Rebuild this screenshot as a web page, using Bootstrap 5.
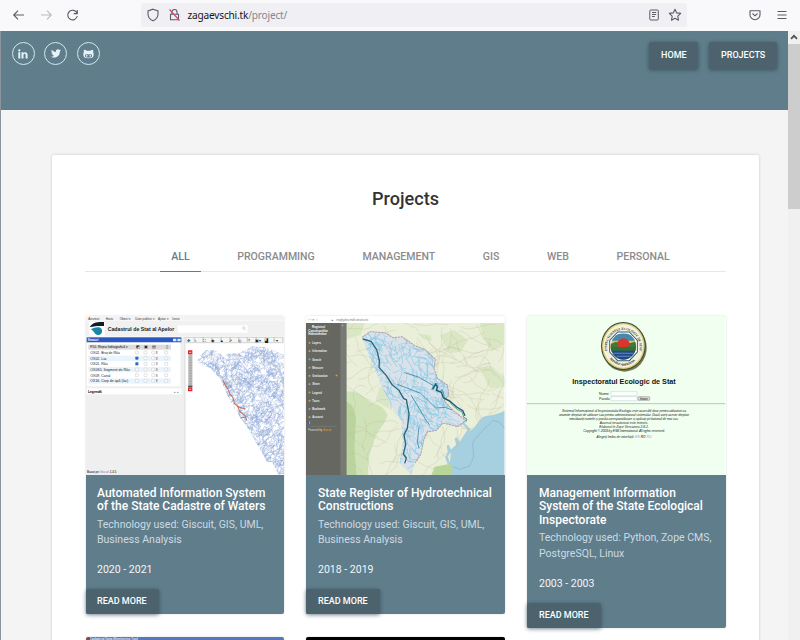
<!DOCTYPE html>
<html lang="en">
<head>
<meta charset="utf-8">
<meta name="viewport" content="width=device-width, initial-scale=1">
<title>Projects</title>
<link href="https://cdn.jsdelivr.net/npm/bootstrap@5.3.0/dist/css/bootstrap.min.css" rel="stylesheet">
<style>
html,body{height:640px;overflow:hidden}
body{font-family:Roboto,"Liberation Sans",sans-serif;background:#f4f4f4;color:#333;font-size:10.54px}
svg{display:block;flex:none}
.chrome{height:31px;background:#f9f9fb;padding:0 13px 1px 12px;color:#5b5b66}
.icon-fwd{margin-left:15px}
.icon-reload{margin-left:13px}
.urlbar{width:546px;height:24px;background:#f0f0f4;border-radius:3px;margin-left:62px;padding:0 5px;font:10.1px/24px "Noto Sans","Open Sans",sans-serif;letter-spacing:-.19px;color:#85858f}
.urlbar b{font-weight:400;color:#15141a}
.icon-lock{margin-left:7.5px}
.address{margin-left:7px}
.icon-star{margin-left:8px}
.icon-menu{margin-left:16px}
.viewport-row{height:609px;border-left:1px solid #8b9499}
.site{width:787px;overflow:hidden}
.site-head{height:79px;background:#607d8b;padding:11px 11px 0 10.5px}
.socials{gap:9.9px}
.social{width:23px;height:23px;border:1.5px solid #d3e9ef;border-radius:50%;color:#e3f3f7}
.main-nav{gap:11px}
.btn.act{background:#4c636e;color:#fff;border:0;border-radius:2px;font-weight:500;font-size:9px;line-height:27px;padding:0 11.7px;box-shadow:0 1px 4px rgba(20,50,70,.55);text-transform:uppercase}
.panel{width:707px;height:500px;margin:45px 0 0 51px;background:#fff;border-radius:2px;box-shadow:0 0 3px rgba(0,0,0,.18);padding:33px 33px 0 33px}
.panel h1{font-size:18.1px;font-weight:500;line-height:22px;margin:0 0 32px;color:#333}
.nav.filters{border-bottom:1px solid #e7e7e7;height:30px;gap:25.6px;padding-left:30px}
.filters .nav-link{padding:0 11px;height:30px;line-height:30px;font-size:10.55px;font-weight:500;color:#8b8b8b;text-transform:uppercase;border-bottom:1.5px solid transparent;border-radius:0}
.filters .nav-link.active{color:#607d8b;border-color:#607d8b}
.tiles{height:356px;padding:44px 0 0 .5px;gap:22px 22.6px}
.tile{width:198.4px;border:0;border-radius:2px;background:linear-gradient(transparent 159px,#607d8b 159px);box-shadow:0 0 2px rgba(0,0,0,.18);color:#fff}
.tile>svg{width:100%;height:159px;border-radius:2px 2px 0 0}
.tile h2{font-size:12.03px;font-weight:500;line-height:13.4px;margin:0 0 3.2px}
.tile .txt{padding:12px 8px 0 11.5px;white-space:nowrap}
.tile p{line-height:15.4px;margin:0 0 14.5px;color:#ccdbe2}
.tile .yr{line-height:15.4px;color:#f1f7fa;margin-bottom:11.5px}
.tile .btn.act{font-size:9px;line-height:25px;padding:0 12px 0 11.5px}
.next-row{gap:22.6px;margin:9px 0 0 .5px}
.peek{height:20px}
.next-a{background:#5579bd;border-left:4px solid #8a4a50;font-size:3.5px;line-height:4px}
.scroller{width:12px;background:#f0f0f0}
.scroller .thumb{height:165px;background:#cdcdcd}
</style>
<script src="https://cdn.jsdelivr.net/npm/bootstrap@5.3.0/dist/js/bootstrap.bundle.min.js"></script>
</head>
<body>
<div class="chrome d-flex align-items-center">
 <svg width="13" height="12" viewBox="0 0 13 12" fill="none" stroke="currentColor" stroke-width="1.1"><path d="M12 6H2M6 1.7 1.7 6 6 10.3"/></svg>
 <svg class="icon-fwd" width="13" height="12" viewBox="0 0 13 12" fill="none" stroke="#bbbbc2" stroke-width="1.1"><path d="M1 6h10M7 1.7 11.3 6 7 10.3"/></svg>
 <svg class="icon-reload" width="13" height="13" viewBox="0 0 13 13" fill="none" stroke="currentColor" stroke-width="1.1"><path d="M11 4.2A4.8 4.8 0 1 0 11.3 7M11.3 1v3.6H7.7"/></svg>
 <div class="urlbar d-flex align-items-center">
  <svg width="14" height="14" viewBox="0 0 14 14" fill="none" stroke="#5b5b66" stroke-width="1.1"><path d="M7 1.2 12 3v3c0 3-1.8 5.5-5 6.8C3.8 11.5 2 9 2 6V3z"/></svg>
  <svg class="icon-lock" width="13" height="14" viewBox="0 0 13 14" fill="none" stroke="#5b5b66" stroke-width="1.1"><path d="M4 6V4a2.5 2.5 0 0 1 5 0v2M2.500 6.200h8v5.500h-8z"/><path d="m1.500 1.500 10 11" stroke="#d84a6b" stroke-width="1.200"/></svg>
  <span class="address"><b>zagaevschi.tk</b>/project/</span>
  <svg class="ms-auto" width="12" height="12" viewBox="0 0 12 12" fill="none" stroke="#5b5b66"><rect x="1.800" y="1" width="8.500" height="10" rx="1"/><path d="M4 3.500h4.200M4 5.500h4.200M4 7.500h2.800"/></svg>
  <svg class="icon-star" width="14" height="14" viewBox="0 0 14 14" fill="none" stroke="#5b5b66" stroke-width="1.100"><path d="m7 1.300 1.700 3.600 4 .5-2.900 2.800.7 4L7 10.300 3.500 12.200l.7-4L1.300 5.400l4-.5z" stroke-linejoin="round"/></svg>
 </div>
 <svg class="ms-auto" width="12" height="12" viewBox="0 0 12 12" fill="none" stroke="currentColor" stroke-width="1.100"><path d="M1 1.700h10v4a5 5 0 0 1-10 0z" stroke-linejoin="round"/><path d="m3.500 4.500 2.500 2.300 2.500-2.300"/></svg>
 <svg class="icon-menu" width="10" height="10" viewBox="0 0 10 10" stroke="currentColor"><path d="M.5 1.500h9M.5 5h9M.5 8.500h9"/></svg>
</div>
<div class="viewport-row d-flex">
 <main class="site">
  <header class="site-head d-flex align-items-start">
   <div class="d-flex socials">
    <a class="social d-flex align-items-center justify-content-center" href="#" aria-label="LinkedIn"><svg width="10" height="10" viewBox="0 0 10 10" fill="currentColor"><path d="M.3 3.200h2v6.300h-2zM3.500 3.200h1.900v.9c.8-1.400 4.200-1.600 4.200 1.600v3.800h-2V6.200c0-1.900-2.100-1.700-2.100 0v3.300h-2z"/><circle cx="1.300" cy="1.400" r="1.100"/></svg></a>
    <a class="social d-flex align-items-center justify-content-center" href="#" aria-label="Twitter"><svg width="10" height="9" viewBox="0 0 24 20" fill="currentColor"><path d="M24 2.400c-.9.400-1.800.7-2.800.8 1-.6 1.800-1.600 2.200-2.700-1 .6-2 1-3.100 1.200A4.900 4.900 0 0 0 11.900 6.200C7.700 6 4.100 4.100 1.700 1 .4 3.200 1 6.200 3.200 7.600c-.8 0-1.600-.2-2.200-.6 0 2.300 1.600 4.400 3.900 4.900-.7.200-1.500.2-2.200.1.600 2 2.400 3.400 4.600 3.400A9.900 9.900 0 0 1 0 17.500 14 14 0 0 0 21.500 5c1-.7 1.800-1.600 2.500-2.600z"/></svg></a>
    <a class="social d-flex align-items-center justify-content-center" href="#" aria-label="GitHub"><svg width="11" height="10" viewBox="0 0 22 19"><path fill="currentColor" d="M2 1c2 0 4 .8 5.500 2h7C16 1.800 18 1 20 1c.7 1.700.7 3.500.2 5 1.200 1.600 1.500 4 .8 7-.8 3.500-3.800 5-10 5S1.800 16.500 1 13c-.7-3-.4-5.400.8-7-.5-1.500-.5-3.300.2-5z"/><path fill="#607d8b" d="M4 13.500c0-3.500 2.500-3.500 7-3.100 4.500-.4 7-.4 7 3.100 0 2.500-3 3.100-7 3.100S4 16 4 13.500z"/><ellipse cx="7.500" cy="12.900" rx="1.500" ry="2" fill="currentColor"/><ellipse cx="14.500" cy="12.900" rx="1.500" ry="2" fill="currentColor"/></svg></a>
   </div>
   <nav class="ms-auto d-flex main-nav">
    <a class="btn act" href="#">Home</a><a class="btn act" href="#">Projects</a>
   </nav>
  </header>
  <section class="panel">
   <h1 class="text-center">Projects</h1>
   <ul class="nav filters justify-content-center">
    <li><a class="nav-link active" href="#">All</a></li><li><a class="nav-link" href="#">Programming</a></li><li><a class="nav-link" href="#">Management</a></li><li><a class="nav-link" href="#">GIS</a></li><li><a class="nav-link" href="#">Web</a></li><li><a class="nav-link" href="#">Personal</a></li>
   </ul>
   <div class="tiles d-flex flex-wrap align-items-start">
    <article class="card tile">
     <svg viewBox="17 18 595 477" preserveAspectRatio="none" font-family="Liberation Sans">
      <rect x="17" y="18" width="595" height="477" fill="#fff"/>
      <g font-size="9" fill="#333"><rect x="17" y="18" width="595" height="14" fill="#f3f3f3"/><text x="24" y="30">Anunturi</text><text x="76" y="30">Harta</text><text x="118" y="30">Obiect ▾</text><text x="165" y="30">Date publice ▾</text><text x="233" y="30">Ajutor ▾</text><text x="276" y="30">Iesire</text></g>
      <rect x="17" y="33" width="595" height="46" fill="#f1f1f1"/><rect x="292" y="46" width="210" height="22" fill="#fff"/>
      <rect x="26" y="35" width="47" height="42" fill="#fff"/><path d="M28 51c8-13 22-16 43-15v12c-18-1-28 1-43 3z" fill="#0b1c2b"/><path d="M31 58c14-8 27-8 32-2 6 10-1 19-10 19-12 0-10-13-22-17z" fill="#1687a5"/>
      <text x="82" y="63" font-size="17.500" font-weight="bold" fill="#222" textLength="200" lengthAdjust="spacingAndGlyphs">Cadastrul de Stat al Apelor</text>
      <circle cx="490" cy="54" r="3.500" fill="none" stroke="#888"/><path d="m493 57 4 4" stroke="#888"/>
      <rect x="17" y="80" width="297" height="415" fill="#efefef"/>
      <rect x="19" y="82" width="284" height="15" fill="#2857c4"/><text x="22" y="93" font-size="9" font-weight="bold" fill="#fff">Straturi</text><path d="M278 86h10v8h-10zM291 86h10v8h-10z" fill="#e1e9f8"/>
      <rect x="20" y="98" width="280" height="131" fill="#fff"/><rect x="24" y="104" width="248" height="15" fill="#dcdcdc"/>
      <text x="30" y="115" font-size="10">F10. Rețea hidrografică ▾</text>
      <g id="layer-rows" font-size="10.500" fill="#222"></g>
      <rect x="19" y="235" width="284" height="18" fill="#fff"/><text x="23" y="248" font-size="10" font-weight="bold">Legendă</text><text x="280" y="248" font-size="10" fill="#777">▴ ▴</text>
      <text x="20" y="490" font-size="9">Bazat pe <tspan fill="#6683bb">Giscuit</tspan> 1.4.5</text>
      <path d="M314 80v415" stroke="#cfcfcf" stroke-width="2"/><rect x="316" y="80" width="296" height="20" fill="#e6e6e6"/>
      <g id="toolbar" fill="#f6f6f6" stroke="#aaa"></g>
      <g font-size="12" fill="#222"><text x="319" y="96">✥</text><text x="345" y="96">i</text><text x="367" y="96">⛶</text><text x="392" y="95">◉</text><text x="418" y="95">▲</text><text x="447" y="95">➚</text><text x="474" y="95">◎</text><text x="502" y="95">?</text><text x="523" y="95">▣▾</text><text x="554" y="95">▟</text><text x="580" y="95">··▾</text></g>
      <path d="M324 133h12v98h-12z" fill="#b9b9b9"/><path d="M324 142h12M324 150h12M324 158h12M324 166h12M324 174h12M324 182h12M324 190h12M324 198h12M324 206h12M324 214h12M324 222h12" stroke="#8f8f8f"/><path d="M323 121h13v12h-13zM323 232h13v12h-13z" fill="#df2430"/><path d="M323 229h13" stroke="#333" stroke-width="3"/><path d="M326 127h7M326 238h7" stroke="#fff" stroke-width="2"/>
      <clipPath id="basin"><path d="m350 145 28-25 25 1 27 18 18-10 23 3 45-23 40 3 55 22v361h-16l-20-39-15 0-25-45-35-60-35-50-25-48-22-50-30-30-33-14z"/></clipPath>
      <g id="streams" clip-path="url(#basin)" fill="none" stroke="#8fa9da" stroke-width="1.300"></g>
      <path d="m427 208 8 19 7 9 7 17 9 10 4 17 11 11 5 13 16 13 5 14m-39-52 17 13 17 4m-14 28 13-2" fill="none" stroke="#c97055" stroke-width="3"/>
     </svg>
     <div class="txt"><h2>Automated Information System<br>of the State Cadastre of Waters</h2><p>Technology used: Giscuit, GIS, UML,<br>Business Analysis</p><div class="yr">2020 - 2021</div></div>
     <div><a class="btn act" href="#">Read more</a></div>
    </article>
    <article class="card tile">
     <svg viewBox="19 18 595 477" preserveAspectRatio="none" font-family="Liberation Sans">
      <rect x="19" y="18" width="595" height="477" fill="#fff"/><g font-size="9" fill="#777"><text x="26" y="34">‹  ›  ⟳  ⌂</text><text x="93" y="34">▲</text><text x="110" y="34">ringhydro.md/constructii</text></g>
      <rect x="140" y="39" width="474" height="456" fill="#eaefd9"/>
      <g fill="#cfe2b8"><path d="M140 245c35-4 50 15 68 28 26 14 40 10 55 42-4 25-28 43-39 74-12 35-20 52-18 106h-66z"/><path d="M140 39h55l-12 35-43 14zM420 75l45-14 40 30-22 34-34 5zM540 39h74v62l-40 22-22-38zM540 175l35-8 39 36v28l-44 4zM352 70l40 6 5 16-26-5zM240 230l48 25-22 40-38-22z" opacity=".65"/></g>
      <path d="M140 275c30 12 31 50 27 90-5 38-1 80 4 130h-31z" fill="#b9d49d"/>
      <path d="M614 302c-23 13-50 14-63 18-16 12-21 29-36 40-15 6-20 22-28 34-15 10-30 22-33 36-2 22-8 42-3 65h163z" fill="#a6cfe0"/>
      <path d="m450 470-10-29 8-14-4-21 9 19 20-20-5-21 12 18 28-44-28-29" stroke="#a6cfe0" stroke-width="7" fill="none"/><path d="m395 495 10-25 48-9 5 34z" fill="#b8d59a"/>
      <clipPath id="land"><path d="M140 39h474v263l-63 18-36 40-28 34-33 36-3 65H140z"/></clipPath>
      <g id="roads" clip-path="url(#land)" fill="none" stroke="#c2bb9c" stroke-width="1.500"></g>
      <path d="m459 470 20 8 30-10 13-28-3-42 20-27 41-40 20 6 14 18" fill="none" stroke="#80a8c9" stroke-width="1.500"/>
      <clipPath id="country"><path d="m187 82 25-17 43 3 25 15 27-3 38 27 30 11 32 30-4 28 10 29 30 20 5 30-15 17 25 28 41 32-25 18-44-11-20 22-28 5-10 25-9 43-17 25-12 36-34-35 10-68-5-59-40-60-29-68-19-48z"/></clipPath>
      <g clip-path="url(#country)"><path d="M180 60h330v430H180z" fill="#d9e2ea"/><g id="hydro" fill="none" stroke="#7cc6e6" stroke-width="1.600"></g></g>
      <path d="m187 82 25-17 43 3 25 15 27-3 38 27 30 11 32 30-4 28 10 29 30 20 5 30-15 17 25 28 41 32-25 18-44-11-20 22-28 5-10 25-9 43-17 25" fill="none" stroke="#b09dac" stroke-width="3" stroke-dasharray="7 2"/>
      <path d="m189 87 25 7 17 25 8 33-1 20 22 25 17 27 21 17 14 25 8 3 8 43-5 43-10 19 5 30-7 28 9 12-5 16" fill="none" stroke="#2b6575" stroke-width="4"/>
      <path d="m396 240 6-15 7-6 5 10-3 13 11 3 5-7 6 17-1 10 18 7 5 11 18 15 15 9 4 15 10 5-4 8M314 188l42 13 44 25M293 223l70 27 45 44 29-2 20 8M334 255l49 82 7 7M358 350l-5 45 5 20" fill="none" stroke="#3590ad" stroke-width="2.600"/><path d="m399 238 9-15 5 8-3 10 15 6 6 16 20 11 20 17 18 11 7 15" fill="none" stroke="#1f5a69" stroke-width="4"/>
      <rect x="19" y="39" width="121" height="456" fill="#656760"/><path d="M122 39h18v456h-18z" fill="#777a72"/>
      <g fill="#fff" font-size="9" font-weight="bold"><text x="37" y="54">Registrul</text><text x="26" y="65">Construcțiilor</text><text x="26" y="76">Hidrotehnice</text><text x="127" y="52">‹</text></g>
      <g id="menu" font-size="8" font-weight="bold" fill="#eee"></g>
      <path d="M26 334h3v9h-3z" fill="#2349d0"/><path d="M29 334h2v9h-2z" fill="#f1d23b"/><path d="M26 349h86" stroke="#999"/><text x="26" y="363" font-size="8" fill="#ddd">Powered by <tspan fill="#f0a034">Giscuit</tspan></text>
     </svg>
     <div class="txt"><h2>State Register of Hydrotechnical<br>Constructions</h2><p>Technology used: Giscuit, GIS, UML,<br>Business Analysis</p><div class="yr">2018 - 2019</div></div>
     <div><a class="btn act" href="#">Read more</a></div>
    </article>
    <article class="card tile">
     <svg viewBox="21 18 595 477" preserveAspectRatio="none" font-family="Liberation Sans">
      <rect x="21" y="18" width="595" height="477" fill="#f0fff0"/>
      <ellipse cx="313" cy="113" rx="67" ry="72" fill="#7b774d"/><ellipse cx="310" cy="108" rx="67" ry="72" fill="#344b35"/><ellipse cx="310" cy="108" rx="64" ry="69" fill="#d8ca78"/><ellipse cx="310" cy="108" rx="60" ry="65" fill="#f4f2dc"/>
      <defs><path id="ring" d="M262 122A49 52 0 1 1 358 122"/><path id="ringlow" d="M262 136A54 57 0 0 0 358 136"/></defs>
      <g font-size="10" font-weight="bold" fill="#333" font-family="Liberation Serif"><text><textPath href="#ring" textLength="180">INSPECTORATUL ECOLOGIC DE STAT</textPath></text><text><textPath href="#ringlow" startOffset="12" textLength="88">REPUBLICA MOLDOVA</textPath></text></g>
      <path d="m293 66h35l24 25v35l-24 26h-35l-24-26V91z" fill="#fff" stroke="#2c5d73" stroke-width="3"/>
      <clipPath id="seal"><ellipse cx="310" cy="109" rx="38" ry="40"/></clipPath><g clip-path="url(#seal)"><path d="M270 68h80v82h-80z" fill="#eac052"/><path d="M270 72h80v20h-80z" fill="#4789ad"/><circle cx="310" cy="106" r="20" fill="#dc352c"/><path d="M270 103l18-8 17 9 18-3 27-7v34h-80z" fill="#3f7a36"/><circle cx="310" cy="102" r="17" fill="#dc352c"/><path d="M270 111h80v12h-80z" fill="#356e37"/><path d="M270 122h80v28h-80z" fill="#234885"/><path d="M280 130h60M290 139h42" stroke="#5990bf" stroke-width="3"/></g>
      <text x="157" y="223" font-size="21.500" font-weight="bold" fill="#151515" textLength="310" lengthAdjust="spacingAndGlyphs">Inspectoratul Ecologic de Stat</text>
      <g font-size="11" fill="#222"><text x="237" y="254">Nume</text><text x="237" y="270">Parola</text></g><path d="M273 245h78v12h-78zM273 260h78v12h-78z" fill="#fff" stroke="#9eb8bd"/><rect x="354" y="260" width="35" height="11" rx="2" fill="#ddd" stroke="#444"/><text x="360" y="269" font-size="8">Intrare</text>
      <path d="M21 281h595" stroke="#aebbae" stroke-width="2.500"/>
      <g font-size="10" font-style="italic" fill="#222" text-anchor="middle"><text x="312" y="307" textLength="372">Sistemul Informațional al Inspectoratului Ecologic este accesibil doar pentru utilizatori cu</text><text x="312" y="319" textLength="390">anumite drepturi de utilizare sau pentru administratorul sistemului. Dacă aveți aceste drepturi</text><text x="312" y="331" textLength="328">introduceți numele și parola corespunzătoare și apăsați pe butonul de mai sus.</text><text x="312" y="343">Accesul neautorizat este interzis.</text><text x="312" y="355">Elaborat în Zope Versiunea 2.6.2.</text><text x="312" y="367" textLength="245">Copyright © 2003 by ESB International. All rights reserved.</text><text x="312" y="384">Alegeți limba de interfață: <tspan fill="#8b97d8">EN</tspan> <tspan fill="#d43333" font-weight="bold">RO</tspan> <tspan fill="#8b97d8">RU</tspan></text></g>
     </svg>
     <div class="txt"><h2>Management Information<br>System of the State Ecological<br>Inspectorate</h2><p>Technology used: Python, Zope CMS,<br>PostgreSQL, Linux</p><div class="yr">2003 - 2003</div></div>
     <div><a class="btn act" href="#">Read more</a></div>
    </article>
   </div>
   <div class="d-flex next-row"><div class="tile peek overflow-hidden next-a"><span>Cadastral Data Monitoring Tool</span></div><div class="tile peek bg-black"></div></div>
  </section>
 </main>
 <aside class="scroller"><svg width="12" height="13" viewBox="0 0 12 13" fill="none" stroke="#505050" stroke-width="1.800"><path d="M3 7.800 6 4.800l3 3"/></svg><div class="thumb"></div></aside>
</div>
<script>
// Seeded generator keeps the map drawings identical on every load.
let seed=7;const rnd=()=>(seed=(seed*16807)%2147483647)/2147483647;
function walk(x,y,a,n,step,turn){let d=`M${x.toFixed(1)} ${y.toFixed(1)}`;for(let i=0;i<n;i++){a+=(rnd()-.5)*turn;x+=Math.cos(a)*step;y+=Math.sin(a)*step;d+=`L${x.toFixed(1)} ${y.toFixed(1)}`}return d}
function fill(id,count,box,angle,spread,n,step,turn){let d='';for(let i=0;i<count;i++)d+=walk(box[0]+rnd()*box[2],box[1]+rnd()*box[3],angle+(rnd()-.5)*spread,n,step,turn);document.getElementById(id).innerHTML=`<path d="${d}"/>`}
fill('streams',2300,[345,105,270,395],-1.0,1.8,5,4,1.6);
fill('hydro',800,[180,60,330,430],1.0,1.7,6,5,1.1);
fill('roads',130,[140,40,474,420],0,6.3,12,9,.9);
document.getElementById('roads').setAttribute('opacity','.6');
document.getElementById('layer-rows').innerHTML=['OX02. Braț de Râu','OX02. Lac','OX01. Râu','OX0S5. Segment de Râu','OX09. Canal','OX16. Corp de apă (lac)'].map((t,i)=>{const y=120+i*17;return `<rect x="24" y="${y}" width="248" height="16" fill="${i%2?'#eaf4fd':'#fff'}"/><text x="30" y="${y+12}">${t}</text>`+[165,191,214,253].map((x,k)=>`<rect x="${x}" y="${y+3}" width="9" height="9" rx="2" fill="${k==0&&(i==1||i==2)?'#1769d2':'#fff'}" stroke="#aaa"/>`).join('')+`<text x="227" y="${y+12}" font-size="8">8</text>`}).join('')+'<text x="166" y="115">◩</text><text x="190" y="115">▣</text><text x="216" y="115">▤</text><text x="256" y="115">▯</text>';
document.getElementById('toolbar').innerHTML=Array.from({length:11},(_,i)=>`<rect x="${317+i*26.500}" y="82" width="24" height="16"/>`).join('');
document.getElementById('menu').innerHTML=['Layers','Information','Search','Measure','Geolocation','Share','Legend','Tours','Bookmark','Account'].map((t,i)=>`<rect x="27" y="${96+i*24.800}" width="5" height="5" fill="${i%3==2?'#a0b080':'#f0a034'}"/><text x="38" y="${102+i*24.800}">${t}</text>`).join('')+'<path d="M108 194h5v5h-5z" fill="#f0a034"/>';
</script>
</body>
</html>
